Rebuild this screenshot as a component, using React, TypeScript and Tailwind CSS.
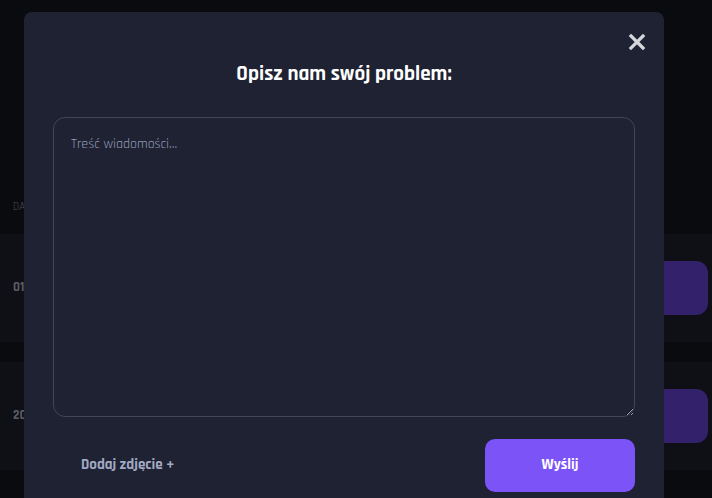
import React from "react";

const font = "font-['Rajdhani','DejaVu_Sans','Liberation_Sans',sans-serif] font-stretch-condensed";

const BgRow = ({ label }: { label: string }) => (
  <div className="h-[108px] bg-[#0e1016] flex items-center justify-between pl-[13px] pr-1">
    <span className="text-[13px] font-bold text-[#5a5d66]">{label}</span>
    <div className="w-[260px] h-[54px] rounded-xl bg-[#34216c]" />
  </div>
);

const App = () => {
  return (
    <div className={`relative w-[712px] h-[498px] overflow-hidden bg-[#0a0b0f] ${font}`}>
      {/* page behind the overlay */}
      <div className="pt-[180px] flex flex-col">
        <div className="h-[54px] pl-[13px] flex items-center text-[11px] text-[#4c4f58]">DATA</div>
        <BgRow label="01.02.2024" />
        <div className="h-[20px]" />
        <BgRow label="20.01.2024" />
      </div>

      {/* modal */}
      <div className="absolute left-[24px] top-[12px] w-[640px] h-[500px] rounded-lg bg-[#1e2232] px-[29px] pt-[48px]">
        <button className="absolute right-[18px] top-[21px] block text-[#d4d6dc]" aria-label="close">
          <svg className="block" width="18" height="18" viewBox="0 0 18 18" fill="none" stroke="currentColor" strokeWidth="3.2" strokeLinecap="square">
            <path d="M3 3 L15 15 M15 3 L3 15" />
          </svg>
        </button>
        <h2 className="text-center text-white text-[21px] font-bold leading-[28px]">
          Opisz nam swój problem:
        </h2>
        <textarea
          className="mt-[29px] block w-[582px] h-[300px] rounded-xl border border-[#414659] bg-transparent px-[17px] py-[16px] text-[14px] text-white placeholder:text-[#959cb8] outline-none"
          placeholder="Treść wiadomości..."
        />
        <div className="mt-[22px] flex items-center justify-between">
          <button className="pl-[28px] text-[15px] font-bold text-[#a2a9c3]">Dodaj zdjęcie +</button>
          <button className="w-[150px] h-[53px] rounded-[10px] bg-[#7b53f6] text-white text-[15px] font-bold">
            Wyślij
          </button>
        </div>
      </div>
    </div>
  );
};

export default App;
